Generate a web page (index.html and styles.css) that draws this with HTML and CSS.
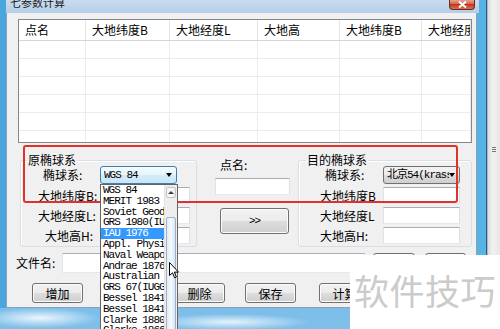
FILE: index.html
```html
<!DOCTYPE html>
<html lang="zh-CN">

<head>
    <meta charset="UTF-8">
    <meta name="viewport" content="width=device-width, initial-scale=1.0">
    <title>七参数计算</title>

    <link rel="stylesheet" href="styles.css">

</head>

<body>
    <div class="desktop">

        <div class="window">
            <div class="titlebar">
                <span class="title">七参数计算</span>
                <span class="close-btn">
                    <svg width="9" height="7" viewBox="0 0 9 7">
                        <path d="M1 0.5 L8 6.5 M8 0.5 L1 6.5" stroke="#fff" stroke-width="2" />
                    </svg>
                </span>
            </div>

            <div class="client">

                <div class="listview">
                    <div class="lv-head">
                        <span>点名</span>
                        <span>大地纬度B</span>
                        <span>大地经度L</span>
                        <span>大地高</span>
                        <span>大地纬度B</span>
                        <span>大地经度L</span>
                    </div>
                    <div class="lv-row"><span></span><span></span><span></span><span></span><span></span><span></span></div>
                    <div class="lv-row"><span></span><span></span><span></span><span></span><span></span><span></span></div>
                    <div class="lv-row"><span></span><span></span><span></span><span></span><span></span><span></span></div>
                    <div class="lv-row"><span></span><span></span><span></span><span></span><span></span><span></span></div>
                    <div class="lv-row"><span></span><span></span><span></span><span></span><span></span><span></span></div>
                    <div class="lv-row"><span></span><span></span><span></span><span></span><span></span><span></span></div>
                </div>

                <div class="groups">
                    <fieldset class="group group-src">
                        <legend>原椭球系</legend>
                        <div class="form-row form-row-combo">
                            <label class="lbl lbl-ell">椭球系:</label>
                            <div class="combo combo-open"><span class="combo-text mono">WGS 84</span><span class="combo-arrow"></span></div>
                        </div>
                        <div class="form-row">
                            <label class="lbl">大地纬度B:</label>
                            <div class="edit"></div>
                        </div>
                        <div class="form-row">
                            <label class="lbl">大地经度L:</label>
                            <div class="edit"></div>
                        </div>
                        <div class="form-row">
                            <label class="lbl lbl-h">大地高H:</label>
                            <div class="edit"></div>
                        </div>
                    </fieldset>

                    <div class="middle">
                        <label class="mid-lbl">点名:</label>
                        <div class="edit mid-edit"></div>
                        <button class="btn btn-go">&gt;&gt;</button>
                    </div>

                    <fieldset class="group group-dst">
                        <legend>目的椭球系</legend>
                        <div class="form-row form-row-combo">
                            <label class="lbl lbl-ell">椭球系:</label>
                            <div class="combo"><span class="combo-text mono">北京54(krassovsky)</span><span class="combo-arrow"></span></div>
                        </div>
                        <div class="form-row">
                            <label class="lbl">大地纬度B</label>
                            <div class="edit"></div>
                        </div>
                        <div class="form-row">
                            <label class="lbl">大地经度L</label>
                            <div class="edit"></div>
                        </div>
                        <div class="form-row">
                            <label class="lbl">大地高H:</label>
                            <div class="edit"></div>
                        </div>
                    </fieldset>
                </div>

                <div class="file-row">
                    <label class="file-lbl">文件名:</label>
                    <div class="edit file-edit"></div>
                    <button class="btn btn-small">打开</button>
                    <button class="btn btn-small">导入</button>
                </div>

                <div class="btn-row">
                    <button class="btn">增加</button>
                    <button class="btn">修改</button>
                    <button class="btn">删除</button>
                    <button class="btn">保存</button>
                    <button class="btn btn-calc">计算</button>
                </div>

            </div>
        </div>

        <div class="strip"><span class="grip"></span></div>

    </div>

    <!-- red marker drawn over the ellipsoid groups -->
    <div class="marker"></div>

    <!-- opened list of the source ellipsoid combo -->
    <div class="droplist">
        <ul class="drop-items mono">
            <li>WGS 84</li>
            <li>MERIT 1983</li>
            <li>Soviet Geodetic 1985</li>
            <li>GRS 1980(IUGG, 1980)</li>
            <li class="selected">IAU 1976</li>
            <li>Appl. Physics 1965</li>
            <li>Naval Weapons Lab 1965</li>
            <li>Andrae 1876</li>
            <li>Australian National</li>
            <li>GRS 67(IUGG 1967)</li>
            <li>Bessel 1841</li>
            <li>Bessel 1841 (Namibia)</li>
            <li>Clarke 1880</li>
            <li>Clarke 1866</li>
        </ul>
        <div class="vscroll">
            <span class="scroll-up"></span>
            <span class="scroll-thumb"></span>
        </div>
    </div>

    <svg class="cursor" width="11" height="17" viewBox="0 0 11 17">
        <path d="M0.5 0.5 L0.5 13.5 L3.5 10.8 L5.6 15.8 L7.4 15 L5.3 10.1 L9.5 10.1 Z" fill="#fff" stroke="#000" stroke-width="1" stroke-linejoin="round" />
    </svg>

    <div class="watermark">软件技巧</div>
</body>

</html>
```

FILE: styles.css
```css
* {
    margin: 0;
    padding: 0;
    box-sizing: border-box;
}

body {
    position: relative;
    width: 500px;
    height: 329px;
    overflow: hidden;
    font-family: "Noto Sans CJK SC", sans-serif;
    font-size: 12px;
    color: #000;
    background:
        radial-gradient(ellipse 60px 10px at 40px 318px, rgba(255, 255, 255, 0.85), rgba(255, 255, 255, 0)),
        radial-gradient(ellipse 80px 8px at 230px 322px, rgba(255, 255, 255, 0.8), rgba(255, 255, 255, 0)),
        linear-gradient(#4ea4de, #7fc0ea);
}

.mono {
    font-family: "Liberation Mono", "Noto Sans CJK SC", monospace;
    font-size: 11px;
    letter-spacing: -1px;
}

.desktop {
    display: flex;
    align-items: flex-start;
    height: 329px;
}

/* window frame */
.window {
    display: flex;
    flex-direction: column;
    width: 487px;
    height: 308px;
    padding: 0 9px 0 6px;
    background: linear-gradient(90deg, #4aa6dc, #2d8ccf 60%, #58b4e4);
    border-right: 1px solid #1f5f8e;
}

.titlebar {
    display: flex;
    justify-content: space-between;
    height: 13px;
    margin-right: -2px;
    background: linear-gradient(#cadcef, #b5cde7);
    overflow: hidden;
}

.title {
    margin: -3px 0 0 4px;
    font-size: 11px;
    line-height: 11px;
    color: #1b1b1b;
}

.close-btn {
    display: flex;
    align-items: center;
    justify-content: center;
    width: 26px;
    height: 10px;
    margin-right: 4px;
    background: linear-gradient(#e8a494, #d25a40 50%, #c13a20 50%, #d9704f);
    border: 1px solid #6e2c20;
    border-top: none;
    border-radius: 0 0 4px 4px;
}

.client {
    flex: 1;
    padding-top: 6px;
    background: #f0f0f0;
    border: 1px solid #8d9fb4;
    border-top: none;
}

/* list view */
.listview {
    width: 454px;
    height: 124px;
    margin-left: 11px;
    background: #fff;
    border: 1px solid #828790;
    overflow: hidden;
}

.lv-head,
.lv-row {
    display: grid;
    grid-template-columns: 67px 84px 88px 82px 82px 1fr;
}

.lv-head {
    height: 21px;
    border-bottom: 1px solid #d5d5d5;
}

.lv-head span {
    padding-left: 6px;
    line-height: 20px;
    white-space: nowrap;
    overflow: hidden;
    border-right: 1px solid #e5e5e5;
}

.lv-row {
    height: 18px;
}

.lv-row span {
    border-right: 1px solid #ececec;
    border-bottom: 1px solid #ececec;
}

/* group boxes */
.groups {
    display: flex;
    align-items: flex-start;
    margin: 11px 0 0 13px;
}

.group {
    min-width: 0;
    padding: 0 0 2px;
    border: 1px solid #d5dfe5;
    border-radius: 3px;
    box-shadow: inset 1px 1px 0 #fff;
}

.group legend {
    margin-left: 6px;
    padding: 0 1px;
    line-height: 12px;
}

.group-src {
    width: 177px;
}

.group-dst {
    width: 174px;
}

.group-dst legend {
    margin-left: 7px;
}

.form-row {
    display: flex;
    align-items: center;
    height: 17px;
    margin-top: 3px;
}

.form-row-combo {
    height: 18px;
    margin-top: 0;
}

.lbl {
    width: 79px;
    padding-left: 17px;
    line-height: 14px;
    white-space: nowrap;
}

.lbl-ell {
    padding-left: 22px;
}

.lbl-h {
    padding-left: 24px;
}

.group-dst .lbl {
    width: 84px;
    padding-left: 21px;
}

.group-dst .lbl-ell {
    padding-left: 26px;
}

.edit {
    height: 17px;
    background: #fff;
    border: 1px solid;
    border-color: #abadb3 #dbdfe6 #e3e9ef #e2e3ea;
}

.group-src .edit {
    width: 90px;
}

.group-dst .edit {
    width: 77px;
}

.combo {
    display: flex;
    align-items: center;
    width: 77px;
    height: 18px;
    padding: 0 4px 0 3px;
    border: 1px solid #707070;
    border-radius: 3px;
    background: linear-gradient(#f2f2f2, #ebebeb 50%, #dddddd 50%, #cfcfcf);
}

.combo-open {
    border-color: #3c7fb1;
    background: linear-gradient(#f5fbfe, #e6f3fb 50%, #d6ecf9 50%, #c8e5f7);
}

.combo-text {
    flex: 1;
    overflow: hidden;
    white-space: nowrap;
    line-height: 14px;
}

.combo-arrow {
    border-left: 3.5px solid transparent;
    border-right: 3.5px solid transparent;
    border-top: 4px solid #000;
}

/* middle column between the groups */
.middle {
    display: flex;
    flex-direction: column;
    width: 101px;
    padding-top: 4px;
}

.mid-lbl {
    margin-left: 23px;
    line-height: 14px;
}

.mid-edit {
    width: 75px;
    margin: 6px 0 0 18px;
}

.btn {
    display: flex;
    align-items: center;
    justify-content: center;
    width: 51px;
    height: 20px;
    font-family: "Noto Sans CJK SC", sans-serif;
    font-size: 12px;
    color: #000;
    border: 1px solid #707070;
    border-radius: 3px;
    background: linear-gradient(#f2f2f2, #ebebeb 50%, #dddddd 50%, #cfcfcf);
    box-shadow: inset 0 0 0 1px #fcfcfc;
}

.btn-go {
    width: 69px;
    height: 26px;
    margin: 13px 0 0 23px;
    font-family: "Liberation Mono", monospace;
    font-size: 11px;
    letter-spacing: -1px;
}

/* file name row and buttons */
.file-row {
    display: flex;
    align-items: center;
    height: 20px;
    margin: 6px 0 0 9px;
}

.file-lbl {
    width: 47px;
    line-height: 14px;
}

.file-edit {
    width: 307px;
    height: 20px;
    margin-right: 8px;
}

.btn-small {
    width: 42px;
    margin-right: 10px;
}

.btn-row {
    display: flex;
    gap: 20px;
    margin: 10px 0 0 25px;
}

.btn-calc {
    margin-left: 3px;
}

.strip {
    position: relative;
    width: 13px;
    height: 329px;
    background: linear-gradient(90deg, #dcdcdc, #f1f1f1 40%, #e6e6e6);
    border-left: 1px solid #b5b5b5;
}

.grip {
    position: absolute;
    top: 147px;
    left: 4px;
    width: 4px;
    height: 5px;
    border-top: 1px solid #777;
    border-bottom: 1px solid #777;
}

.grip::after {
    content: "";
    position: absolute;
    top: 1px;
    left: 0;
    width: 4px;
    border-top: 1px solid #777;
}

/* overlays */
.marker {
    position: absolute;
    left: 23px;
    top: 145px;
    width: 435px;
    height: 58px;
    border: 2px solid #e2302a;
    border-radius: 3px;
}

.droplist {
    position: absolute;
    left: 100px;
    top: 184px;
    display: flex;
    width: 78px;
    height: 150px;
    background: #fff;
    border: 1px solid #646464;
    overflow: hidden;
}

.drop-items {
    flex: 1;
    min-width: 0;
    list-style: none;
}

.drop-items li {
    height: 10.8px;
    padding-left: 2px;
    line-height: 10.8px;
    white-space: nowrap;
    overflow: hidden;
}

.drop-items li.selected {
    background: #3399ff;
    color: #fff;
}

.vscroll {
    display: flex;
    flex-direction: column;
    width: 13px;
    padding: 2px 1px 0;
    background: #eeeeee;
    border-left: 1px solid #e2e2e2;
}

.scroll-up {
    display: flex;
    align-items: center;
    justify-content: center;
    height: 11px;
    border: 1px solid #c3c3c3;
    border-radius: 2px;
    background: linear-gradient(90deg, #f3f3f3, #fdfdfd 50%, #e8e8e8);
}

.scroll-up::before {
    content: "";
    border-left: 3px solid transparent;
    border-right: 3px solid transparent;
    border-bottom: 3px solid #3b3b3b;
}

.scroll-thumb {
    flex: 1;
    margin-top: 19px;
    border: 1px solid #9eb1c9;
    border-radius: 2px;
    background: linear-gradient(90deg, #e3ecf7, #f7fafd 50%, #d9e5f3);
}

.cursor {
    position: absolute;
    left: 169px;
    top: 262px;
}

.watermark {
    position: absolute;
    left: 350px;
    top: 255px;
    width: 150px;
    height: 74px;
    padding: 17px 0 0 4px;
    background: #fff;
    color: #cbcbcb;
    font-size: 35px;
    line-height: 35px;
    letter-spacing: 0.5px;
    white-space: nowrap;
}
```
